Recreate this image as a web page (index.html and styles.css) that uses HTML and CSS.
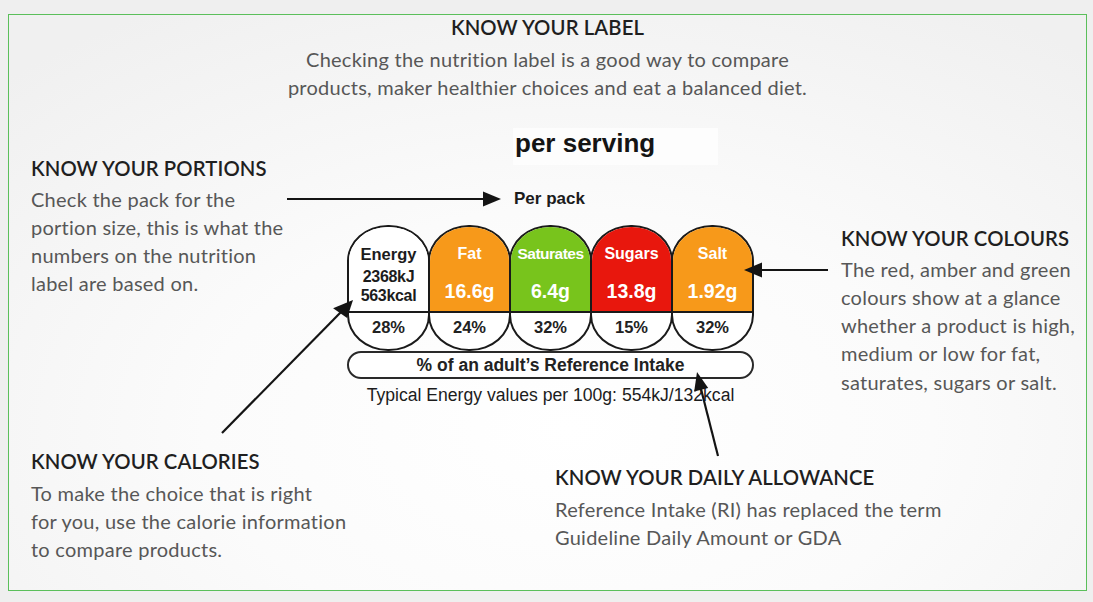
FILE: index.html
```html
<!DOCTYPE html>
<html lang="en">
<head>
<meta charset="utf-8">
<title>Know your label</title>
<link rel="stylesheet" href="styles.css">
</head>
<body>
<div class="frame">
  <header class="intro">
    <h1 class="heading">KNOW YOUR LABEL</h1>
    <p class="text">Checking the nutrition label is a good way to compare<br>products, maker healthier choices and eat a balanced diet.</p>
  </header>

  <div class="middle">
    <section class="callout portions">
      <h2 class="heading">KNOW YOUR PORTIONS</h2>
      <p class="text">Check the pack for the<br>portion size, this is what the<br>numbers on the nutrition<br>label are based on.</p>
    </section>

    <div class="label-area">
      <div class="per-serving">per serving</div>
      <div class="per-pack">Per pack</div>
      <div class="pills">
        <div class="pill energy">
          <div class="pill-top">
            <div class="pill-name">Energy</div>
            <div class="energy-val">2368kJ<br>563kcal</div>
          </div>
          <div class="pill-pct">28%</div>
        </div>
        <div class="pill amber">
          <div class="pill-top">
            <div class="pill-name">Fat</div>
            <div class="pill-val">16.6g</div>
          </div>
          <div class="pill-pct">24%</div>
        </div>
        <div class="pill green">
          <div class="pill-top">
            <div class="pill-name narrow">Saturates</div>
            <div class="pill-val">6.4g</div>
          </div>
          <div class="pill-pct">32%</div>
        </div>
        <div class="pill red">
          <div class="pill-top">
            <div class="pill-name">Sugars</div>
            <div class="pill-val">13.8g</div>
          </div>
          <div class="pill-pct">15%</div>
        </div>
        <div class="pill amber">
          <div class="pill-top">
            <div class="pill-name">Salt</div>
            <div class="pill-val">1.92g</div>
          </div>
          <div class="pill-pct">32%</div>
        </div>
      </div>
      <div class="ri">% of an adult’s Reference Intake</div>
      <div class="typical">Typical Energy values per 100g: 554kJ/132kcal</div>
    </div>

    <section class="callout colours">
      <h2 class="heading">KNOW YOUR COLOURS</h2>
      <p class="text">The red, amber and green<br>colours show at a glance<br>whether a product is high,<br>medium or low for fat,<br>saturates, sugars or salt.</p>
    </section>
  </div>

  <div class="bottom">
    <section class="callout calories">
      <h2 class="heading">KNOW YOUR CALORIES</h2>
      <p class="text">To make the choice that is right<br>for you, use the calorie information<br>to compare products.</p>
    </section>
    <section class="callout daily">
      <h2 class="heading">KNOW YOUR DAILY ALLOWANCE</h2>
      <p class="text">Reference Intake (RI) has replaced the term<br>Guideline Daily Amount or GDA</p>
    </section>
  </div>
</div>

<svg class="arrows" width="1093" height="602" viewBox="0 0 1093 602" aria-hidden="true">
  <g stroke="#141414" stroke-width="2.2" fill="none">
    <line x1="287" y1="199" x2="484" y2="199"/>
    <line x1="828" y1="270" x2="761" y2="270"/>
    <line x1="222" y1="433" x2="341" y2="312"/>
    <line x1="718" y1="456" x2="701" y2="389"/>
  </g>
  <g fill="#141414">
    <polygon points="501,199 483,191.5 483,206.5"/>
    <polygon points="744,270 762,262.5 762,277.5"/>
    <polygon points="353,300 347.1,318.0 333.1,308.2"/>
    <polygon points="697,372 708.2,388 694.2,391.5"/>
  </g>
</svg>
</body>
</html>
```

FILE: styles.css
```css
html, body {
  margin: 0;
  padding: 0;
}

body {
  position: relative;
  width: 1093px;
  height: 602px;
  overflow: hidden;
  background: #efefef;
  font-family: "Lato", "Open Sans", "DejaVu Sans", sans-serif;
}

.frame {
  box-sizing: border-box;
  width: 1079px;
  height: 577px;
  margin: 14px 0 0 8px;
  border: 1px solid #5bbf5b;
  background: radial-gradient(ellipse 75% 85% at 52% 72%, #ffffff 0%, #fbfbfb 45%, #f0f0f0 100%);
  display: flex;
  flex-direction: column;
}

.heading {
  margin: 0;
  font-size: 20.3px;
  line-height: 24px;
  font-weight: 600;
  color: #1f1f1f;
  letter-spacing: 0.1px;
}

.text {
  margin: 6px 0 0;
  font-size: 20px;
  line-height: 28.3px;
  letter-spacing: 0.25px;
  color: #575757;
}

/* header */
.intro {
  text-align: center;
}

.intro .text {
  line-height: 28px;
}

/* middle row */
.middle {
  display: grid;
  grid-template-columns: 329px 494px 1fr;
  align-items: start;
}

.portions {
  margin-top: 55px;
  padding-left: 22px;
}

.portions .text,
.colours .text {
  margin-top: 4.5px;
}

.colours {
  margin-top: 125px;
  padding-left: 9px;
}

.label-area {
  font-family: "Liberation Sans", Arial, sans-serif;
  color: #1c1c1c;
  display: flex;
  flex-direction: column;
  align-items: flex-start;
}

.per-serving {
  margin-top: 27px;
  margin-left: 175px;
  width: 205px;
  height: 37px;
  padding-left: 2px;
  box-sizing: border-box;
  background: rgba(255, 255, 255, 0.7);
  font-size: 26px;
  line-height: 30px;
  font-weight: 700;
  color: #141414;
}

.per-pack {
  margin-top: 24px;
  margin-left: 176px;
  font-size: 17px;
  line-height: 20px;
  font-weight: 700;
}

.pills {
  margin-top: 16px;
  margin-left: 9px;
  display: flex;
}

.pill {
  box-sizing: border-box;
  width: 83px;
  height: 126px;
  border: 2px solid #1a1a1a;
  border-radius: 41px / 36px;
  overflow: hidden;
  background: #ffffff;
  display: flex;
  flex-direction: column;
  text-align: center;
}

.pill + .pill {
  margin-left: -2px;
}

.pill-top {
  height: 67px;
  border-bottom: 2px solid #1a1a1a;
  padding-top: 17px;
  color: #ffffff;
}

.amber .pill-top { background: #f7991a; }
.green .pill-top { background: #78c41c; }
.red .pill-top { background: #e8170d; }
.energy .pill-top { background: #ffffff; color: #1c1c1c; }

.pill-name {
  font-size: 16px;
  line-height: 20px;
  font-weight: 700;
}

.energy .pill-name {
  font-size: 16.5px;
}

.pill-name.narrow {
  font-size: 15.5px;
  letter-spacing: -0.5px;
}

.pill-val {
  margin-top: 15px;
  font-size: 19.5px;
  line-height: 24px;
  font-weight: 700;
}

.energy-val {
  margin-top: 3px;
  font-size: 16px;
  line-height: 19px;
  font-weight: 700;
  letter-spacing: -0.3px;
}

.pill-pct {
  padding-top: 4px;
  font-size: 16.5px;
  line-height: 20px;
  font-weight: 700;
  color: #222222;
}

.ri {
  box-sizing: border-box;
  margin-left: 9px;
  width: 407px;
  height: 28px;
  border: 2px solid #2a2a2a;
  border-radius: 14px;
  background: #ffffff;
  text-align: center;
  font-size: 17.5px;
  line-height: 24px;
  font-weight: 700;
  color: #222222;
}

.typical {
  margin-top: 6px;
  margin-left: 9px;
  width: 407px;
  text-align: center;
  font-size: 17.6px;
  line-height: 20px;
  color: #1c1c1c;
}

/* bottom row */
.bottom {
  display: grid;
  grid-template-columns: 546px 1fr;
  align-items: start;
}

.calories {
  margin-top: 44px;
  padding-left: 22px;
}

.daily {
  margin-top: 60px;
}

.calories .text,
.daily .text {
  line-height: 28px;
}

/* arrows overlay */
.arrows {
  position: absolute;
  top: 0;
  left: 0;
  pointer-events: none;
}
```
